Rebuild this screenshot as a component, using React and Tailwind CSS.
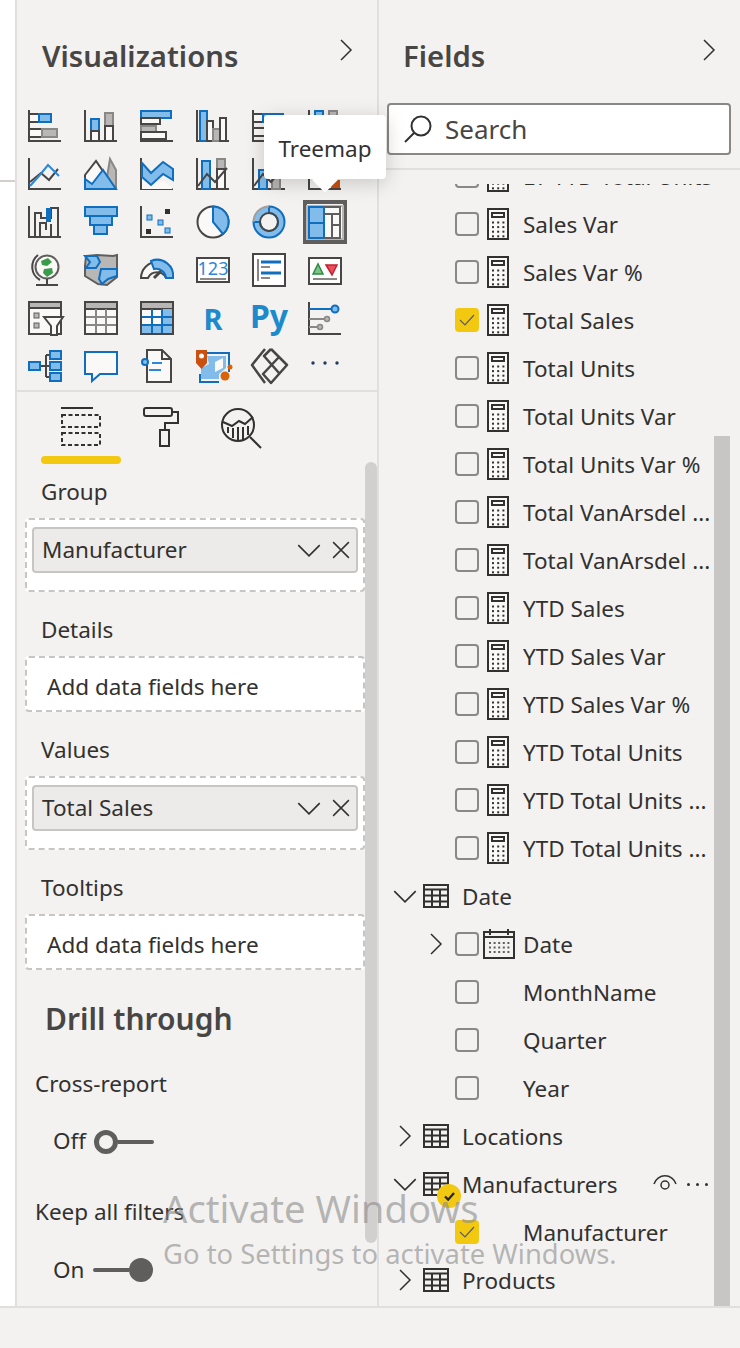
const DARK = '#484644'
const BLUE = '#106ebe'
const LIGHT = '#82bcea'
const GRAY = '#b9b7b5'

const Box = ({ x, y, w, h, fill = '#faf9f8', stroke = DARK, sw = 2 }) => (
  <rect x={x} y={y} width={w} height={h} fill={fill} stroke={stroke} strokeWidth={sw} />
)
const B = (p) => <Box fill={LIGHT} stroke={BLUE} {...p} />
const G = (p) => <Box fill={GRAY} stroke="#8a8886" {...p} />
const Axis = () => <path d="M2 2V33H34" fill="none" stroke={DARK} strokeWidth="2" />

function TableGrid({ matrix }) {
  return (
    <>
      <rect x="2" y="2" width="32" height="32" fill="#faf9f8" stroke={DARK} strokeWidth="2" />
      <rect x="2" y="2" width="32" height="7" fill={GRAY} stroke={DARK} strokeWidth="2" />
      {matrix && <path d="M23 9H34V34H2V24H23Z" fill={LIGHT} />}
      <path d="M13 9V34M23 9V34M2 17H34M2 25H34" stroke={matrix ? BLUE : '#8a8886'} strokeWidth="2" fill="none" />
      <rect x="2" y="2" width="32" height="32" fill="none" stroke={DARK} strokeWidth="2" />
    </>
  )
}

const vizIcons = [
  <><Axis /><Box x={2} y={6} w={10} h={8} /><B x={12} y={6} w={12} h={8} /><Box x={2} y={21} w={13} h={8} /><G x={15} y={21} w={15} h={8} /></>,
  <><Axis /><B x={8} y={11} w={8} h={12} /><Box x={8} y={23} w={8} h={10} /><G x={22} y={5} w={8} h={13} /><Box x={22} y={18} w={8} h={15} /></>,
  <><Axis /><B x={2} y={3} w={30} h={7} /><Box x={2} y={10} w={19} h={6} /><G x={2} y={18} w={15} h={6} /><Box x={2} y={24} w={25} h={7} /></>,
  <><Axis /><B x={5} y={3} w={7} h={30} /><Box x={12} y={13} w={6} h={20} /><G x={18} y={21} w={7} h={12} /><Box x={25} y={10} w={6} h={23} /></>,
  <><Axis /><Box x={2} y={6} w={10} h={8} /><B x={12} y={6} w={20} h={8} /><Box x={2} y={20} w={14} h={8} /><G x={16} y={20} w={16} h={8} /></>,
  <><Axis /><B x={8} y={3} w={8} h={14} /><Box x={8} y={17} w={8} h={16} /><G x={22} y={3} w={8} h={12} /><Box x={22} y={15} w={8} h={18} /></>,

  <><Axis /><path d="M3 26L14 17L22 24L31 13" fill="none" stroke={DARK} strokeWidth="2" /><path d="M3 30L12 20L21 9L32 20" fill="none" stroke="#2b88d8" strokeWidth="2" /></>,
  <><path d="M22 33L27 3L33 14V33Z" fill={GRAY} stroke="#8a8886" strokeWidth="2" /><path d="M2 19L13 5L26 24L20 33H2Z" fill="#faf9f8" stroke={DARK} strokeWidth="2" /><path d="M2 33V23L9 28L20 14L33 33Z" fill={LIGHT} stroke={BLUE} strokeWidth="2" /></>,
  <><Axis /><path d="M3 33V22L12 29L25 25L34 33Z" fill="#faf9f8" /><path d="M3 7L12 17L24 6L34 13V24L24 18L12 29L3 21Z" fill={LIGHT} stroke={BLUE} strokeWidth="2" /></>,
  <><Axis /><B x={7} y={5} w={8} h={28} /><G x={22} y={3} w={8} h={10} /><Box x={22} y={13} w={8} h={20} /><path d="M3 30L12 18L20 26L32 12" fill="none" stroke={DARK} strokeWidth="2" /></>,
  <><Axis /><B x={8} y={14} w={8} h={19} /><G x={21} y={14} w={8} h={19} /><path d="M3 30L12 18L20 26L32 12" fill="none" stroke={DARK} strokeWidth="2" /></>,
  <><Axis /><rect x="24" y="24" width="9" height="8" fill="#ca5010" /></>,

  <><path d="M2 2V33H34" fill="none" stroke={DARK} strokeWidth="2" /><path d="M8 33V9H14V14H24V4H31V33M13 33V19H19V26M24 33V20" fill="none" stroke={DARK} strokeWidth="2" /><path d="M19 18V4H24V18Z" fill={BLUE} /></>,
  <><B x={2} y={3} w={32} h={9} /><B x={7} y={12} w={22} h={9} /><B x={11} y={21} w={13} h={9} /></>,
  <><Axis /><rect x="8" y="11" width="5" height="5" fill={LIGHT} stroke={BLUE} /><rect x="19" y="16" width="5" height="5" fill={LIGHT} stroke={BLUE} /><rect x="26" y="24" width="5" height="5" fill={LIGHT} stroke={BLUE} /><rect x="26" y="5" width="5" height="5" fill="#323130" /><rect x="7" y="25" width="5" height="5" fill="#323130" /></>,
  <><circle cx="18" cy="18" r="15.5" fill="#faf9f8" stroke={DARK} strokeWidth="2" /><path d="M18 2.5A15.5 15.5 0 0 1 28 30L18 18Z" fill={LIGHT} stroke={BLUE} strokeWidth="2" /></>,
  <><circle cx="18" cy="18" r="12.5" fill="none" stroke={LIGHT} strokeWidth="6" /><path d="M18 2.5A15.5 15.5 0 1 1 2.5 18H9A9 9 0 1 0 18 9Z" fill={LIGHT} stroke={BLUE} strokeWidth="2" /><path d="M2.5 18A15.5 15.5 0 0 1 18 2.5" fill="none" stroke="#a19f9d" strokeWidth="2" /><circle cx="18" cy="18" r="9" fill="none" stroke={DARK} strokeWidth="2" /></>,
  <><rect x="0" y="2" width="36" height="33" fill="#faf9f8" stroke={GRAY} strokeWidth="2" /><B x={2} y={3} w={15} h={16} /><B x={2} y={19} w={15} h={15} /><path d="M17 10H33V34H17M25 10V34M25 21H33M17 3H33V10" fill="none" stroke="#605e5c" strokeWidth="2" /></>,

  <><path d="M11 3A15 15 0 0 0 13 28" fill="none" stroke={DARK} strokeWidth="2" /><circle cx="20" cy="15" r="11.5" fill="#faf9f8" stroke="#605e5c" strokeWidth="2" /><path d="M14 9L21 6L25 10L20 14L15 13ZM17 17L25 16L26 21L20 25L16 21Z" fill="#3a9b4a" /><path d="M20 27V32M9 33H31" stroke={DARK} strokeWidth="2" fill="none" /></>,
  <><path d="M3 4L14 3L30 4L34 3V25L24 33L15 32L2 24V14Z" fill={GRAY} stroke="#605e5c" strokeWidth="2" /><path d="M2 4H14L17 10L13 16H3L7 10Z" fill={LIGHT} stroke={BLUE} strokeWidth="2" /><path d="M18 17H34V24L25 27L19 32L16 27Z" fill={LIGHT} stroke={BLUE} strokeWidth="2" /></>,
  <><path d="M2 26A16 16 0 0 1 34 26H27A10 10 0 0 0 9 26Z" fill="#faf9f8" stroke={DARK} strokeWidth="2" /><path d="M12 9A16 16 0 0 1 34 26H27A10 10 0 0 0 15 17Z" fill={LIGHT} stroke={BLUE} strokeWidth="2" /><path d="M15 26L22 19" stroke={DARK} strokeWidth="3" /></>,
  <><Box x={2} y={6} w={32} h={24} fill="#fff" /><text x="18" y="23" textAnchor="middle" fontSize="18" fontFamily="Noto Sans, sans-serif" fill="#2b88d8">123</text><path d="M5 27H31" stroke="#8a8886" strokeWidth="2" /></>,
  <><Box x={2} y={2} w={32} h={32} fill="#fff" /><path d="M7 7V29" stroke="#8a8886" strokeWidth="2" /><path d="M10 10H30M10 21H30" stroke={BLUE} strokeWidth="3" /><path d="M10 15H19M10 26H19" stroke="#8a8886" strokeWidth="2" /></>,
  <><Box x={2} y={6} w={32} h={26} fill="#fff" /><path d="M6 22L11 12L16 22Z" fill="#7cc48a" stroke="#2e8b42" strokeWidth="1.5" /><path d="M19 13H30L25 23Z" fill="#e8505b" stroke="#c4202c" strokeWidth="1.5" /><path d="M6 27H30" stroke="#8a8886" strokeWidth="2" /></>,

  <><rect x="2" y="2" width="32" height="32" fill="#faf9f8" stroke={DARK} strokeWidth="2" /><rect x="2" y="2" width="32" height="6" fill={GRAY} stroke={DARK} strokeWidth="2" /><rect x="7" y="13" width="5" height="5" fill={GRAY} stroke="#605e5c" /><rect x="7" y="23" width="5" height="5" fill={GRAY} stroke="#605e5c" /><path d="M17 17H36L30 26V35H24V26Z" fill="#faf9f8" stroke={DARK} strokeWidth="2" /></>,
  <TableGrid />,
  <TableGrid matrix />,
  <text x="18" y="30" textAnchor="middle" fontSize="29" fontWeight="700" fontFamily="Noto Sans, sans-serif" fill="#1e8acb">R</text>,
  <text x="18" y="28" textAnchor="middle" fontSize="32" fontWeight="700" fontFamily="Noto Sans, sans-serif" fill="#1e8acb">Py</text>,
  <><path d="M2 2V34H34" fill="none" stroke={DARK} strokeWidth="2" /><path d="M2 9H25" stroke={BLUE} strokeWidth="2" /><circle cx="28" cy="9" r="3.5" fill={LIGHT} stroke={BLUE} strokeWidth="2" /><path d="M2 19H17M2 27H10" stroke="#8a8886" strokeWidth="2" /><circle cx="20" cy="19" r="2.5" fill={GRAY} stroke="#8a8886" strokeWidth="1.5" /><circle cx="13" cy="27" r="2.5" fill={GRAY} stroke="#8a8886" strokeWidth="1.5" /></>,

  <><path d="M13 18H19M19 7V29M19 7H23M19 18H23M19 29H23" fill="none" stroke={DARK} strokeWidth="2" /><B x={2} y={14} w={11} h={8} /><B x={23} y={3} w={11} h={8} /><B x={23} y={14} w={11} h={8} /><B x={23} y={25} w={11} h={8} /></>,
  <path d="M2 4H34V26H17L9 33V26H2Z" fill="#faf9f8" stroke={BLUE} strokeWidth="2" />,
  <><path d="M8 2H23L32 11V34H8Z" fill="#faf9f8" stroke={DARK} strokeWidth="2" /><path d="M23 2V11H32" fill="none" stroke={DARK} strokeWidth="2" /><circle cx="6" cy="14" r="3" fill={LIGHT} stroke={BLUE} strokeWidth="2" /><path d="M13 15H23M10 22H22" stroke="#2b88d8" strokeWidth="2" /></>,
  <><path d="M6 5H34V24M5 26V34H24" fill="none" stroke={BLUE} strokeWidth="2" /><path d="M12 8H31V20L24 26L24 31H6V20L14 16Z" fill={LIGHT} /><path d="M20 14L28 10V20L20 24Z" fill="#faf9f8" /><path d="M1 2H12V15L6.500 21L1 15Z" fill="#ca5010" /><circle cx="6.500" cy="8" r="2.500" fill="#faf9f8" /><circle cx="30" cy="28" r="4.500" fill="#d9630a" /><circle cx="35" cy="19" r="2.500" fill="#d9630a" /></>,
  <path d="M14 1L1 17L14 35M20 1L13 8L28 25M20 1L36 17L20 35L12 26L28 9" fill="none" stroke={DARK} strokeWidth="2.500" strokeLinejoin="round" />,
  <><circle cx="6" cy="15" r="1.700" fill="#243a5e" /><circle cx="18" cy="15" r="1.700" fill="#243a5e" /><circle cx="30" cy="15" r="1.700" fill="#243a5e" /></>,
]

const fieldRows = [
  { name: 'LY YTD Total Units' },
  { name: 'Sales Var' },
  { name: 'Sales Var %' },
  { name: 'Total Sales', checked: true },
  { name: 'Total Units' },
  { name: 'Total Units Var' },
  { name: 'Total Units Var %' },
  { name: 'Total VanArsdel ...' },
  { name: 'Total VanArsdel ...' },
  { name: 'YTD Sales' },
  { name: 'YTD Sales Var' },
  { name: 'YTD Sales Var %' },
  { name: 'YTD Total Units' },
  { name: 'YTD Total Units ...' },
  { name: 'YTD Total Units ...' },
]

function Chevron({ dir = 'right', className = '' }) {
  const d = dir === 'right' ? 'M2 1L12 11L2 21' : 'M1 2L11 12L21 2'
  const box = dir === 'right' ? '0 0 14 22' : '0 0 22 14'
  return (
    <svg viewBox={box} className={className} fill="none" stroke="#323130" strokeWidth="1.500">
      <path d={d} />
    </svg>
  )
}

function Checkbox({ checked }) {
  if (checked) {
    return (
      <span className="w-6 h-6 shrink-0 rounded bg-[#f2c811] flex items-center justify-center">
        <svg viewBox="0 0 16 12" className="w-4 h-3" fill="none" stroke="#605e5c" strokeWidth="1.200">
          <path d="M1 6L6 11L15 1" />
        </svg>
      </span>
    )
  }
  return <span className="w-6 h-6 shrink-0 rounded border-2 border-[#8a8886]" />
}

function CalcIcon() {
  const dots = []
  for (let r = 0; r < 4; r++) {
    for (let c = 0; c < 3; c++) {
      dots.push(<rect key={`${r}-${c}`} x={5 + c * 5.2} y={13.500 + r * 4.600} width="2" height="2" fill="#323130" />)
    }
  }
  return (
    <svg viewBox="0 0 22 32" className="w-[22px] h-8 shrink-0">
      <rect x="1" y="1" width="20" height="30" fill="#faf9f8" stroke="#323130" strokeWidth="2" />
      <rect x="5" y="5" width="12" height="4" fill="none" stroke="#323130" strokeWidth="2" />
      {dots}
    </svg>
  )
}

function TableIcon() {
  return (
    <svg viewBox="0 0 26 24" className="w-[26px] h-6 shrink-0" fill="none" stroke="#323130" strokeWidth="2">
      <rect x="1" y="1" width="24" height="22" />
      <path d="M1 5.500H25M1 11.500H25M1 17.500H25M9 5.500V23M17 5.500V23" />
    </svg>
  )
}

function CalendarIcon() {
  const dots = []
  for (let r = 0; r < 3; r++) {
    for (let c = 0; c < 5; c++) {
      dots.push(<rect key={`${r}-${c}`} x={6 + c * 4.600} y={13 + r * 4.500} width="2" height="2" fill="#605e5c" />)
    }
  }
  return (
    <svg viewBox="0 0 32 30" className="w-8 h-[30px] shrink-0">
      <rect x="1" y="3" width="30" height="26" fill="none" stroke="#323130" strokeWidth="2" />
      <path d="M1 8H31M7 0V6M25 0V6" stroke="#323130" strokeWidth="2" />
      {dots}
    </svg>
  )
}

function Well({ pill, hint }) {
  return (
    <div className="ml-2 w-[340px] bg-white border-2 border-dashed border-[#c8c6c4] rounded px-[5px] pt-[7px] text-[22.5px]">
      {pill ? (
        <div className="h-[46px] mb-[17px] bg-[#edebe9] border-2 border-[#c8c6c4] rounded flex items-center pl-2 pr-[6px]">
          <span className="flex-1">{pill}</span>
          <Chevron dir="down" className="w-6 h-[15px] mr-[11px]" />
          <svg viewBox="0 0 16 16" className="w-[18px] h-[18px]" fill="none" stroke="#323130" strokeWidth="1.300">
            <path d="M1 1L15 15M15 1L1 15" />
          </svg>
        </div>
      ) : (
        <div className="h-[45px] pl-[15px] pb-[2px] flex items-center">{hint}</div>
      )}
    </div>
  )
}

function Label({ children, className = '' }) {
  return <div className={`h-[26px] flex items-center text-[22.5px] ${className}`}>{children}</div>
}

function VizPane() {
  return (
    <div className="w-[364px] shrink-0 border-x-2 border-[#e1dfdd] relative">
      <div className="h-[103px] flex pl-[25px] pt-[32px] pr-[24px] justify-between items-start">
        <span className="text-[29.3px] leading-[48px] font-semibold text-[#484644]">Visualizations</span>
        <Chevron className="w-[14px] h-[22px] mt-[7px]" />
      </div>
      <div className="grid grid-cols-[repeat(6,56px)] auto-rows-[48px] pl-[10px] pt-[5px] h-[287px]">
        {vizIcons.map((icon, i) => (
          <div key={i} className="relative">
            {i === 17 && <div className="absolute left-[-4px] top-[-4px] w-[44px] h-[44px] border-4 border-[#605e5c]" />}
            <svg viewBox="-1 0 38 36" className="w-[38px] h-9 -ml-px overflow-visible relative">{icon}</svg>
          </div>
        ))}
      </div>
      <div className="h-[2px] bg-[#e1dfdd]" />

      <div className="h-[72px] relative flex items-start pl-[24px]">
        <div className="w-[80px] flex flex-col items-center">
          <svg viewBox="0 0 40 40" className="w-10 h-10 mt-[15px]" fill="none" stroke="#323130">
            <path d="M0 1H32" strokeWidth="2" />
            <rect x="1" y="8" width="38" height="12" strokeWidth="2" strokeDasharray="4 2.500" />
            <rect x="1" y="26" width="38" height="12" strokeWidth="2" strokeDasharray="4 2.500" />
          </svg>
          <div className="w-[80px] h-2 mt-[9px] rounded-full bg-[#f2c811]" />
        </div>
        <svg viewBox="0 0 36 40" className="w-9 h-10 mt-[15px] ml-[22px]" fill="none" stroke="#323130" strokeWidth="2">
          <rect x="1" y="1" width="28" height="8" rx="2" />
          <path d="M29 5H35V16H22V23" />
          <rect x="17" y="23" width="9" height="16" />
        </svg>
        <svg viewBox="0 0 42 42" className="w-[42px] h-[42px] mt-[15px] ml-[41px]" fill="none" stroke="#323130" strokeWidth="2">
          <circle cx="18" cy="18" r="16" />
          <path d="M3 15L12 19L19 14L25 17L33 10" />
          <path d="M8 26V20M13 31V21M18 33V20M23 33V20M28 28V19" />
          <path d="M30 30L41 41" />
        </svg>
      </div>

      <div className="mt-[15px]">
        <Label className="pl-[24px]">Group</Label>
        <div className="mt-[13px]"><Well pill="Manufacturer" /></div>
        <Label className="pl-[24px] mt-[25px]">Details</Label>
        <div className="mt-[13px]"><Well hint="Add data fields here" /></div>
        <Label className="pl-[24px] mt-[25px]">Values</Label>
        <div className="mt-[13px]"><Well pill="Total Sales" /></div>
        <Label className="pl-[24px] mt-[25px]">Tooltips</Label>
        <div className="mt-[13px]"><Well hint="Add data fields here" /></div>
        <div className="h-10 mt-[28px] pl-[28px] flex items-center text-[30px] font-semibold text-[#484644]">Drill through</div>
        <Label className="pl-[18px] mt-[33px]">Cross-report</Label>
        <div className="h-[30px] mt-[30px] pl-[36px] flex items-center text-[22.5px]">
          <span className="w-[41px] -mt-[2px]">Off</span>
          <span className="w-6 h-6 rounded-full border-[5px] border-[#605e5c]" />
          <span className="w-[36px] h-1 rounded-r bg-[#605e5c]" />
        </div>
        <Label className="pl-[18px] mt-[42px]">Keep all filters</Label>
        <div className="h-[30px] mt-[30px] pl-[36px] flex items-center text-[22.5px]">
          <span className="w-[40px]">On</span>
          <span className="w-[36px] h-1 rounded-l bg-[#605e5c]" />
          <span className="w-6 h-6 rounded-full bg-[#605e5c]" />
        </div>
      </div>

      <div className="absolute left-[348px] top-[462px] w-[12px] h-[781px] rounded-full bg-[#d2d0ce]" />
    </div>
  )
}

function FieldRow({ name, checked }) {
  return (
    <div className="h-12 flex items-center pl-[75px] text-[22.5px]">
      <Checkbox checked={checked} />
      <span className="ml-2 mr-[14px]"><CalcIcon /></span>
      <span className="whitespace-nowrap mt-[2px]">{name}</span>
    </div>
  )
}

function ChildRow({ name, checked }) {
  return (
    <div className="h-12 flex items-center pl-[75px] text-[22.5px]">
      <Checkbox checked={checked} />
      <span className="ml-[44px] whitespace-nowrap mt-[2px]">{name}</span>
    </div>
  )
}

function TableRow({ name, open, children }) {
  return (
    <div className="h-12 flex items-center text-[22.5px] relative">
      <span className="w-[50px] -mr-[7px] flex justify-center">
        {open ? <Chevron dir="down" className="w-6 h-[15px]" /> : <Chevron className="w-[14px] h-[22px]" />}
      </span>
      <TableIcon />
      <span className="ml-[13px] mt-[2px]">{name}</span>
      {children}
    </div>
  )
}

function FieldsPane() {
  return (
    <div className="flex-1 relative overflow-hidden">
      <div className="h-[103px] flex pl-[24px] pr-[24px] pt-[32px] justify-between items-start">
        <span className="text-[29.3px] leading-[48px] font-semibold text-[#484644]">Fields</span>
        <Chevron className="w-[14px] h-[22px] mt-[7px]" />
      </div>
      <div className="ml-[8px] w-[344px] h-[52px] bg-white border-2 border-[#8a8886] rounded flex items-center pl-[15px]">
        <svg viewBox="0 0 28 28" className="w-7 h-7" fill="none" stroke="#323130" strokeWidth="2">
          <circle cx="17" cy="11" r="9.500" />
          <path d="M10 18L1 27" />
        </svg>
        <span className="ml-[13px] text-[26px] text-[#484644]">Search</span>
      </div>
      <div className="h-[2px] mt-[13px] bg-[#e1dfdd]" />
      <div className="mt-[14px] h-[1122px] overflow-hidden pl-px">
        <div className="-mt-[32px]">
          {fieldRows.map((f, i) => <FieldRow key={i} {...f} />)}
          <TableRow name="Date" open />
          <div className="h-12 flex items-center pl-[49px] text-[22.5px]">
            <Chevron className="w-[14px] h-[22px] mr-[12px]" />
            <Checkbox />
            <span className="ml-1 mr-2"><CalendarIcon /></span>
            <span className="mt-[2px]">Date</span>
          </div>
          <ChildRow name="MonthName" />
          <ChildRow name="Quarter" />
          <ChildRow name="Year" />
          <TableRow name="Locations" />
          <TableRow name="Manufacturers" open>
            <span className="absolute left-[57px] top-[24px] w-6 h-6 rounded-full bg-[#f2c811] flex items-center justify-center">
              <svg viewBox="0 0 12 10" className="w-[11px] h-[9px]" fill="none" stroke="#252423" strokeWidth="2.500">
                <path d="M1 5L4.500 8.500L11 1" />
              </svg>
            </span>
            <svg viewBox="0 0 24 16" className="absolute left-[273px] top-[15px] w-6 h-4" fill="none" stroke="#323130" strokeWidth="1.500">
              <path d="M1 9A11.500 11.500 0 0 1 23 9" />
              <circle cx="12" cy="10" r="4" />
            </svg>
            <span className="absolute left-[307px] top-[23px] flex gap-[6px]">
              <i className="w-[3px] h-[3px] bg-[#323130] rounded-full" />
              <i className="w-[3px] h-[3px] bg-[#323130] rounded-full" />
              <i className="w-[3px] h-[3px] bg-[#323130] rounded-full" />
            </span>
          </TableRow>
          <ChildRow name="Manufacturer" checked />
          <TableRow name="Products" />
        </div>
      </div>
      <div className="absolute left-[335px] top-[436px] w-[16px] h-[870px] bg-[#c8c6c4]" />
    </div>
  )
}

export default function App() {
  return (
    <div className="w-[740px] h-[1348px] relative overflow-hidden bg-[#f3f2f1] text-[#323130] font-['Noto_Sans','Open_Sans',sans-serif]">
      <div className="h-[1306px] flex">
        <div className="w-[15px] shrink-0 bg-white pt-[180px]">
          <div className="h-[2px] bg-[#d2d0ce]" />
        </div>
        <VizPane />
        <FieldsPane />
      </div>
      <div className="h-[42px] border-t-2 border-[#e1dfdd]" />

      {/* tooltip over the icon grid */}
      <div className="absolute left-[264px] top-[115px] w-[122px] h-[64px] bg-white rounded-sm shadow-[0_4px_20px_rgba(0,0,0,0.18)] flex items-center justify-center pt-[3px] text-[22.5px]">
        Treemap
        <span className="absolute left-[52px] top-[56px] w-[18px] h-[18px] bg-white rotate-45" />
      </div>

      {/* activation watermark */}
      <div className="absolute left-[163px] top-[1184px] pointer-events-none text-[#8a8a8a]/60 whitespace-nowrap">
        <div className="text-[38.2px] leading-[48px]">Activate Windows</div>
        <div className="text-[27.4px] leading-[36px] mt-[4px]">Go to Settings to activate Windows.</div>
      </div>
    </div>
  )
}
